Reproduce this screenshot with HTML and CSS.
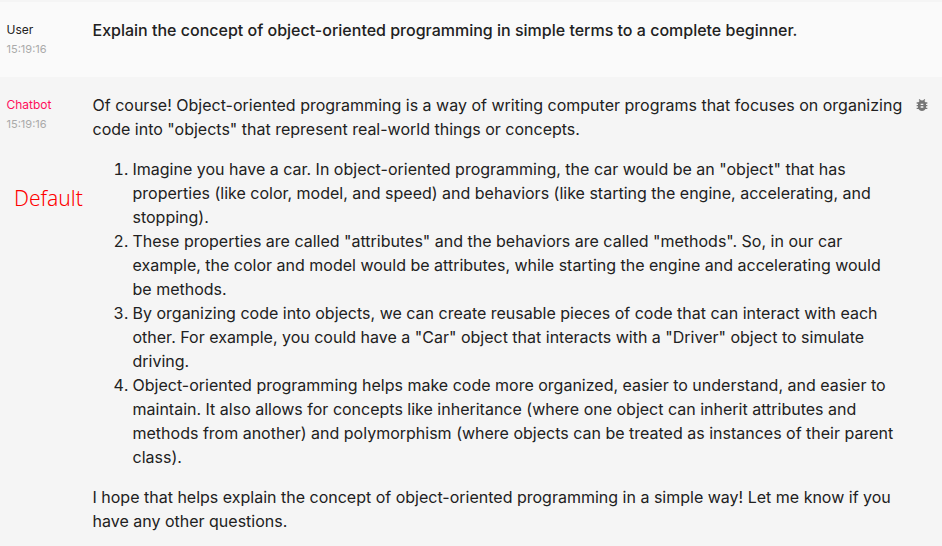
FILE: index.html
```html
<!DOCTYPE html>
<html lang="en">
<head>
  <meta charset="utf-8">
  <title>Chat</title>
  <link rel="stylesheet" href="styles.css">
</head>
<body>
  <div class="chat">
    <div class="msg msg-user">
      <div class="meta">
        <div class="name">User</div>
        <div class="time">15:19:16</div>
      </div>
      <div class="body"><p class="question">Explain the concept of object-oriented programming in simple terms to a complete beginner.</p></div>
    </div>
    <div class="msg msg-bot">
      <div class="meta">
        <div class="name name-bot">Chatbot</div>
        <div class="time">15:19:16</div>
      </div>
      <div class="body">
        <p>Of course! Object-oriented programming is a way of writing computer programs that focuses on organizing code into "objects" that represent real-world things or concepts.</p>
        <ol>
          <li>Imagine you have a car. In object-oriented programming, the car would be an "object" that has properties (like color, model, and speed) and behaviors (like starting the engine, accelerating, and stopping).</li>
          <li>These properties are called "attributes" and the behaviors are called "methods". So, in our car example, the color and model would be attributes, while starting the engine and accelerating would be methods.</li>
          <li>By organizing code into objects, we can create reusable pieces of code that can interact with each other. For example, you could have a "Car" object that interacts with a "Driver" object to simulate driving.</li>
          <li>Object-oriented programming helps make code more organized, easier to understand, and easier to maintain. It also allows for concepts like inheritance (where one object can inherit attributes and methods from another) and polymorphism (where objects can be treated as instances of their parent class).</li>
        </ol>
        <p>I hope that helps explain the concept of object-oriented programming in a simple way! Let me know if you have any other questions.</p>
      </div>
      <div class="tools">
        <svg class="bug" viewBox="0 0 24 24" width="16" height="16"><path d="M14 12h-4v-2h4m0 6h-4v-2h4m6-6h-2.81a5.985 5.985 0 0 0-1.82-1.96L17 4.41 15.59 3l-2.17 2.17a6.002 6.002 0 0 0-2.83 0L8.41 3 7 4.41l1.62 1.63C7.88 6.55 7.26 7.22 6.81 8H4v2h2.09c-.05.33-.09.66-.09 1v1H4v2h2v1c0 .34.04.67.09 1H4v2h2.81c1.04 1.79 2.97 3 5.19 3s4.15-1.21 5.19-3H20v-2h-2.09c.05-.33.09-.66.09-1v-1h2v-2h-2v-1c0-.34-.04-.67-.09-1H20V8z"/></svg>
      </div>
      <div class="label">Default</div>
    </div>
  </div>
</body>
</html>
```

FILE: styles.css
```css
html, body {
  margin: 0;
  height: 100%;
  overflow: hidden;
}
body {
  background: #f5f5f5;
  font-family: Inter, "Liberation Sans", sans-serif;
  color: #212121;
  font-size: 16px;
  line-height: 24px;
}
.chat {
  padding-top: 2px;
}
.msg {
  display: flex;
  position: relative;
  padding-left: 6.5px;
}
.msg-user {
  background: #fafafa;
  height: 59px;
  padding-top: 16px;
}
.msg-bot {
  background: #f5f5f5;
  padding-top: 16px;
}
.meta {
  width: 86px;
  flex: none;
  font-size: 12px;
  line-height: 20px;
  padding-top: 2px;
}
.name {
  color: #212121;
}
.name-bot {
  color: #ff0f5c;
}
.time {
  color: #aaaaaa;
  font-size: 11px;
  line-height: 18px;
}
.body {
  width: 811px;
  flex: none;
}
.body p {
  margin: 0;
}
.question {
  font-weight: 500;
}
ol {
  margin: 16px 0;
  padding-left: 40px;
}
.tools {
  padding: 4px 0 0 10px;
}
.bug {
  display: block;
  fill: #757575;
}
.label {
  position: absolute;
  left: 14px;
  top: 108px;
  color: #ff0000;
  font-family: "Noto Sans", sans-serif;
  font-weight: 300;
  font-size: 21px;
  line-height: 26px;
}
```
